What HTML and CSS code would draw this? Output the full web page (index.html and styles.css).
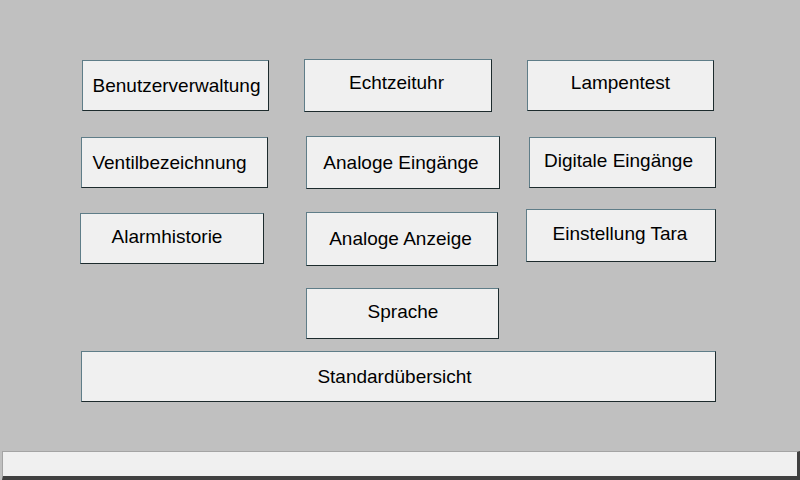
FILE: index.html
```html
<!DOCTYPE html>
<html lang="de">
  <head>
    <meta charset="UTF-8" />
    <meta name="viewport" content="width=device-width, initial-scale=1" />
    <title>Menü</title>
    <link rel="stylesheet" href="styles.css">
  </head>
  <body>
    <main class="screen">
      <div class="row row-1">
        <button class="btn">Benutzerverwaltung</button>
        <button class="btn">Echtzeituhr</button>
        <button class="btn">Lampentest</button>
      </div>
      <div class="row row-2">
        <button class="btn">Ventilbezeichnung</button>
        <button class="btn">Analoge Eingänge</button>
        <button class="btn">Digitale Eingänge</button>
      </div>
      <div class="row row-3">
        <button class="btn">Alarmhistorie</button>
        <button class="btn">Analoge Anzeige</button>
        <button class="btn">Einstellung Tara</button>
      </div>
      <div class="row row-4">
        <button class="btn">Sprache</button>
      </div>
      <div class="row row-5">
        <button class="btn">Standardübersicht</button>
      </div>
      <div class="status-bar"></div>
    </main>
  </body>
</html>
```

FILE: styles.css
```css
html, body {
  margin: 0;
  padding: 0;
}

body {
  width: 800px;
  height: 480px;
  overflow: hidden;
  background: #c0c0c0;
  font-family: 'Liberation Sans', Arial, sans-serif;
}

.screen {
  display: flex;
  flex-direction: column;
  height: 480px;
}

.row {
  display: flex;
  align-items: flex-start;
}

.btn {
  box-sizing: border-box;
  display: flex;
  align-items: center;
  justify-content: center;
  height: 51px;
  padding: 0;
  background: #f0f0f0;
  color: #000;
  font-family: 'Liberation Sans', Arial, sans-serif;
  font-size: 19px;
  border: 1px solid;
  border-color: #5f7d88 #1d2b2d #1d2b2d #5f7d88;
  border-radius: 0;
}

/* row 1 */
.row-1 { margin-top: 59px; }
.row-1 .btn:nth-child(1) { margin: 1px 0 0 82px; width: 187px; padding-left: 2px; }
.row-1 .btn:nth-child(2) { margin-left: 35px; width: 188px; height: 53px; padding: 0 3px 6px 0; }
.row-1 .btn:nth-child(3) { margin: 1px 0 0 35px; width: 187px; padding-bottom: 6px; }

/* row 2 */
.row-2 { margin-top: 24px; }
.row-2 .btn:nth-child(1) { margin: 1px 0 0 81px; width: 187px; padding-right: 10px; }
.row-2 .btn:nth-child(2) { margin-left: 38px; width: 194px; height: 53px; padding-right: 4px; }
.row-2 .btn:nth-child(3) { margin: 1px 0 0 29px; width: 187px; padding: 0 8px 3px 0; }

/* row 3 */
.row-3 { margin-top: 20px; }
.row-3 .btn:nth-child(1) { margin: 4px 0 0 80px; width: 184px; padding: 0 10px 3px 0; }
.row-3 .btn:nth-child(2) { margin: 3px 0 0 42px; width: 192px; height: 54px; padding-right: 3px; }
.row-3 .btn:nth-child(3) { margin-left: 28px; width: 190px; height: 53px; padding: 0 2px 4px 0; }

/* row 4 */
.row-4 { margin-top: 22px; }
.row-4 .btn { margin-left: 306px; width: 193px; padding: 0 0 4px 1px; }

/* row 5 */
.row-5 { margin-top: 12px; }
.row-5 .btn { margin-left: 81px; width: 635px; padding-right: 8px; }

.status-bar {
  box-sizing: border-box;
  margin: 49px 0 0 2px;
  width: 798px;
  height: 29px;
  background: #f0f0f0;
  border-top: 1px solid #a4a4a4;
  border-left: 1px solid #a4a4a4;
  border-right: 3px solid #404040;
  border-bottom: 4px solid #404040;
}
```
